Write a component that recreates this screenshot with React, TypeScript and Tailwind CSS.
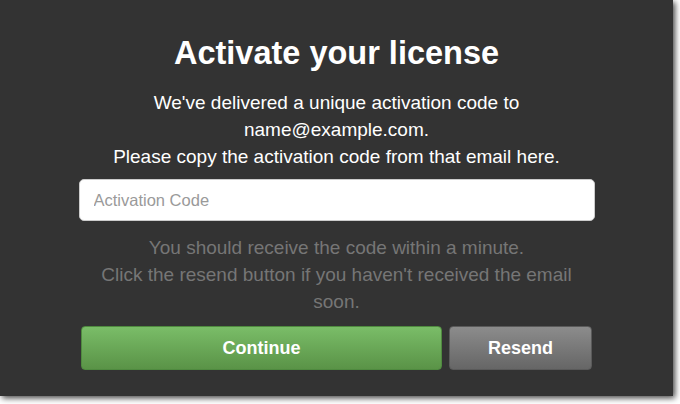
export default function App() {
  return (
    <div className="w-[680px] h-[404px] bg-white" style={{ fontFamily: '"Liberation Sans", Arial, sans-serif' }}>
      <div className="w-[673px] h-[396px] bg-[#333333] shadow-[2px_2px_6px_rgba(0,0,0,0.75)] flex flex-col items-center">
        <h1 className="mt-[34px] text-[32.5px] leading-[38px] font-bold text-white">Activate your license</h1>
        <div className="mt-[17px] text-[19px] leading-[27px] text-white text-center">
          <p>We've delivered a unique activation code to</p>
          <p>name@example.com.</p>
          <p>Please copy the activation code from that email here.</p>
        </div>
        <input
          className="mt-[9px] w-[516px] h-[42px] bg-white rounded-[5px] px-[14px] text-[16.5px] text-[#333] placeholder:text-[#9a9a9a] outline-none border border-[#cccccc]"
          placeholder="Activation Code"
        />
        <div className="mt-[13px] text-[19px] leading-[27px] text-[#767676] text-center">
          <p>You should receive the code within a minute.</p>
          <p>Click the resend button if you haven't received the email</p>
          <p>soon.</p>
        </div>
        <div className="mt-[11px] w-[511px] flex gap-[7px]">
          <button className="flex-1 h-[44px] rounded-[4px] border border-[#4f8a3f] bg-gradient-to-b from-[#7abd68] to-[#5a9347] text-white font-bold text-[18px]">
            Continue
          </button>
          <button className="w-[143px] h-[44px] rounded-[4px] border border-[#5a5a5a] bg-gradient-to-b from-[#8c8c8c] to-[#666666] text-white font-bold text-[18px]">
            Resend
          </button>
        </div>
      </div>
    </div>
  );
}
